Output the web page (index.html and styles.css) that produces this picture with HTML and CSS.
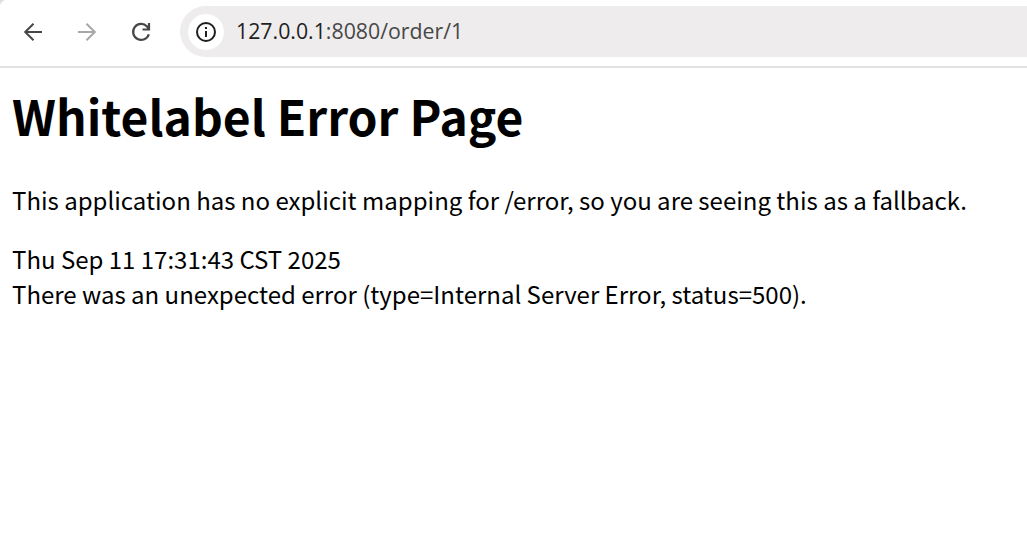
FILE: index.html
```html
<!DOCTYPE html>
<html lang="en">
<head>
  <meta charset="UTF-8">
  <title>Whitelabel Error Page</title>
  <link rel="stylesheet" href="styles.css">
</head>
<body>

  <!-- Browser toolbar -->
  <div class="toolbar">
    <svg class="icon back" viewBox="0 0 24 24"><path d="M21 12H4.500M12.500 3.700L4.200 12l8.300 8.300"/></svg>
    <svg class="icon forward" viewBox="0 0 24 24"><path d="M3 12h16.500M11.500 3.700l8.300 8.300-8.300 8.300"/></svg>
    <svg class="icon reload" viewBox="0 0 24 24"><path d="M19.800 14.200A8 8 0 1 1 18 6.500L20 8.800M20 3v6.500H13.500"/></svg>
    <div class="address">
      <span class="info">
        <svg class="icon" viewBox="0 0 24 24"><circle cx="12" cy="12" r="9"/><path d="M12 11v6M12 7v2"/></svg>
      </span>
      <span class="url">127.0.0.1<span class="path">:8080/order/1</span></span>
    </div>
  </div>

  <!-- Page content -->
  <div class="page">
    <h1>Whitelabel Error Page</h1>
    <p>This application has no explicit mapping for /error, so you are seeing this as a fallback.</p>
    <div>Thu Sep 11 17:31:43 CST 2025</div>
    <div>There was an unexpected error (type=Internal Server Error, status=500).</div>
  </div>

</body>
</html>
```

FILE: styles.css
```css
* {
  margin: 0;
  padding: 0;
  box-sizing: border-box;
}

body {
  background: #fff;
  color: #000;
  height: 100vh;
  overflow: hidden;
  font-family: "Noto Sans CJK SC", sans-serif;
}

.toolbar {
  height: 68px;
  padding: 6px 0 9px 21px;
  display: flex;
  align-items: center;
  background: radial-gradient(circle at 8px 8px, #fff 8px, #dfdfdf 9px) 0 0 / 8px 8px no-repeat;
  border-bottom: 2px solid #e1e1e1;
}

.icon {
  width: 24px;
  height: 24px;
  fill: none;
  stroke: #474747;
  stroke-width: 2;
}

.forward {
  margin-left: 30px;
  stroke: #a8a8a8;
}

.reload {
  margin-left: 30px;
  stroke-width: 2.2;
}

.address {
  flex: 1;
  height: 51px;
  margin-left: 27px;
  padding-left: 8px;
  display: flex;
  align-items: center;
  background: #eeeced;
  border-radius: 26px 0 0 26px;
}

.info {
  width: 36px;
  height: 36px;
  display: flex;
  align-items: center;
  justify-content: center;
  background: #fff;
  border-radius: 50%;
}

.info .icon {
  stroke: #1f1f1f;
}

.url {
  margin-left: 12px;
  padding-bottom: 2px;
  font-family: "Open Sans", sans-serif;
  font-size: 21.3px;
  color: #1f1f1f;
}

.path {
  color: #474747;
}

.page {
  padding: 10px 12px;
  font-size: 24px;
  line-height: 35px;
}

h1 {
  font-size: 48px;
  line-height: 74px;
  margin-bottom: 30px;
}

p {
  margin-bottom: 24px;
}
```
